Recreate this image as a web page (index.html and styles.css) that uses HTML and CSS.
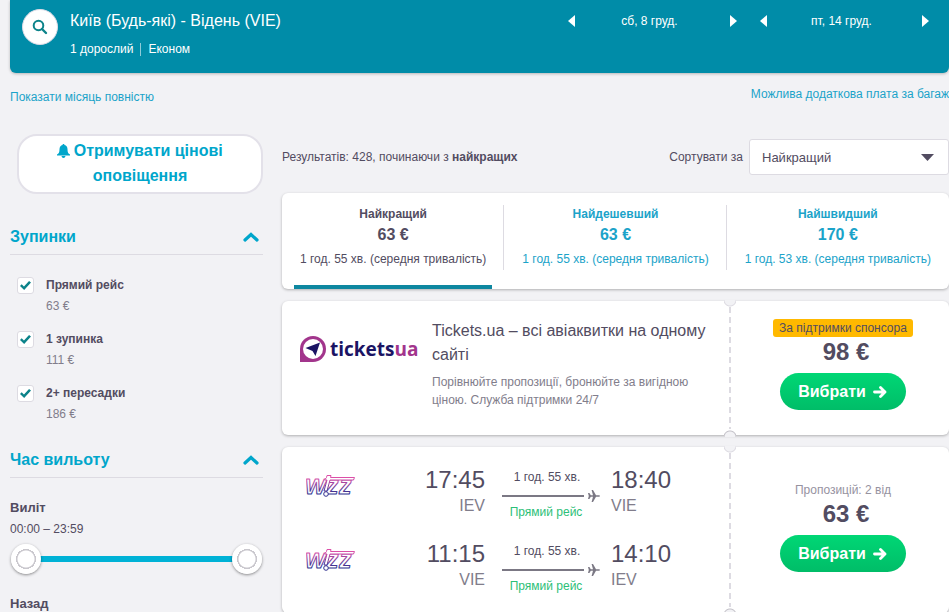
FILE: index.html
```html
<!DOCTYPE html>
<html lang="uk">
<head>
<meta charset="utf-8">
<meta name="viewport" content="width=device-width, initial-scale=1">
<title>Київ – Відень</title>
<link rel="stylesheet" href="styles.css">
</head>
<body>
<svg class="defs" aria-hidden="true">
  <defs>
    <linearGradient id="wizz-ink" gradientUnits="userSpaceOnUse" x1="0" y1="0" x2="0" y2="24">
      <stop offset="0.2" stop-color="#dc4fa8"/>
      <stop offset="0.85" stop-color="#30308f"/>
    </linearGradient>
    <symbol id="wizz" viewBox="0 0 50 24">
      <g fill="#fff" stroke="url(#wizz-ink)" stroke-width="1" stroke-linejoin="round">
        <text class="wizz-text" x="-1" y="21">W</text>
        <text class="wizz-text wizz-z" x="20" y="21">z</text>
        <text class="wizz-text wizz-z" x="33" y="21">z</text>
        <path d="M20.500 4.500l.5-2h4l-.5 2h24l-1 2.500H24l-3 11h-3l3-11h-2.500z"/>
        <circle cx="20" cy="21" r="2.300"/>
      </g>
    </symbol>
    <symbol id="plane" viewBox="0 0 12 12">
      <path fill="#7b7884" d="M0 3h1.400l1.400 2.200H5L3.600 0H5l3 5.200h3c1.300 0 1.300 1.600 0 1.600H8L5 12H3.600L5 6.800H2.800L1.400 9H0l.8-3z"/>
    </symbol>
    <symbol id="arrow" viewBox="0 0 14 12">
      <path d="M1.500 6h10.500M7.500 1.500L12 6l-4.500 4.500" fill="none" stroke="#fff" stroke-width="2.800" stroke-linecap="round" stroke-linejoin="round"/>
    </symbol>
    <symbol id="chevron" viewBox="0 0 16 10">
      <path d="M2 8l6-5.500L14 8" fill="none" stroke="#00a6cb" stroke-width="3.200" stroke-linecap="round"/>
    </symbol>
  </defs>
</svg>

<header class="search-bar">
  <button class="search-btn" type="button" aria-label="Пошук">
    <svg width="16" height="16" viewBox="0 0 16 16"><circle cx="6.500" cy="6.500" r="4.800" fill="none" stroke="#0c838a" stroke-width="2"/><path d="M10 10l4 4" stroke="#0c838a" stroke-width="2.400" stroke-linecap="round"/></svg>
  </button>
  <div class="trip">
    <h1>Київ (Будь-які) - Відень (VIE)</h1>
    <p><span>1 дорослий</span><span>Економ</span></p>
  </div>
  <div class="dates">
    <div class="date">
      <button class="prev" type="button" aria-label="Попередній день"></button>
      <span>сб, 8 груд.</span>
      <button class="next" type="button" aria-label="Наступний день"></button>
    </div>
    <div class="date">
      <button class="prev" type="button" aria-label="Попередній день"></button>
      <span>пт, 14 груд.</span>
      <button class="next" type="button" aria-label="Наступний день"></button>
    </div>
  </div>
</header>

<nav class="links">
  <a href="#month">Показати місяць повністю</a>
  <a href="#baggage" class="baggage">Можлива додаткова плата за багаж</a>
</nav>

<div class="layout">
  <aside class="filters">
    <button class="alert" type="button"><svg width="13" height="14" viewBox="0 0 13 14"><path fill="#00a6cb" d="M6.500 0c.7 0 1 .5 1 1.100 2 .5 3 2 3 4.100 0 3 .7 4.300 2.500 5.300v.9H0v-.9c1.800-1 2.500-2.300 2.500-5.300 0-2.100 1-3.600 3-4.100 0-.6.300-1.100 1-1.100zM4.500 12h4c-.2 1.300-1 2-2 2s-1.800-.7-2-2z"/></svg> Отримувати цінові оповіщення</button>

    <section>
      <h2><button type="button">Зупинки<svg width="16" height="10"><use href="#chevron"/></svg></button></h2>
      <ul class="stops">
        <li><input type="checkbox" id="s0" checked><label for="s0">Прямий рейс<small>63 €</small></label></li>
        <li><input type="checkbox" id="s1" checked><label for="s1">1 зупинка<small>111 €</small></label></li>
        <li><input type="checkbox" id="s2" checked><label for="s2">2+ пересадки<small>186 €</small></label></li>
      </ul>
    </section>

    <section>
      <h2><button type="button">Час вильоту<svg width="16" height="10"><use href="#chevron"/></svg></button></h2>
      <div class="times">
        <h3>Виліт</h3>
        <p>00:00 – 23:59</p>
        <div class="slider">
          <input type="range" min="0" max="1439" value="0" aria-label="Виліт від">
          <input type="range" min="0" max="1439" value="1439" aria-label="Виліт до">
        </div>
        <h3>Назад</h3>
      </div>
    </section>
  </aside>

  <main class="results">
    <div class="toolbar">
      <p>Результатів: 428, починаючи з <b>найкращих</b></p>
      <label for="sort">Сортувати за</label>
      <div class="select"><select id="sort"><option>Найкращий</option><option>Найдешевший</option><option>Найшвидший</option></select></div>
    </div>

    <div class="card tabs">
      <button class="tab active" type="button"><b>Найкращий</b><strong>63 €</strong><span>1 год. 55 хв. (середня тривалість)</span></button>
      <button class="tab" type="button"><b>Найдешевший</b><strong>63 €</strong><span>1 год. 55 хв. (середня тривалість)</span></button>
      <button class="tab" type="button"><b>Найшвидший</b><strong>170 €</strong><span>1 год. 53 хв. (середня тривалість)</span></button>
    </div>

    <article class="card ticket">
      <div class="sponsor">
        <svg class="tickets-logo" width="122" height="28" viewBox="0 0 122 28" role="img" aria-label="ticketsua">
          <path fill="#a2358c" d="M0 27V14A13 13 0 1 1 13 27z"/>
          <circle cx="13" cy="14" r="10" fill="#fff"/>
          <path fill="#1b1464" d="M5.500 13L20 7.500 15.500 21l-3-5z"/>
          <text class="tickets-text" x="30" y="21" fill="#1b1464">tickets<tspan fill="#a2358c">ua</tspan></text>
        </svg>
        <div>
          <h3>Tickets.ua – всі авіаквитки на одному сайті</h3>
          <p>Порівнюйте пропозиції, бронюйте за вигідною ціною. Служба підтримки 24/7</p>
        </div>
      </div>
      <div class="offer">
        <span class="badge">За підтримки спонсора</span>
        <strong>98 €</strong>
        <button class="select-btn" type="button">Вибрати<svg width="14" height="12"><use href="#arrow"/></svg></button>
      </div>
    </article>

    <article class="card ticket">
      <div class="legs">
        <div class="leg">
          <svg class="wizz" width="50" height="24" role="img" aria-label="Wizz"><use href="#wizz"/></svg>
          <div class="point from"><b>17:45</b><span>IEV</span></div>
          <div class="route"><span>1 год. 55 хв.</span><div class="line"><i></i><svg width="12" height="12"><use href="#plane"/></svg></div><em>Прямий рейс</em></div>
          <div class="point"><b>18:40</b><span>VIE</span></div>
        </div>
        <div class="leg">
          <svg class="wizz" width="50" height="24" role="img" aria-label="Wizz"><use href="#wizz"/></svg>
          <div class="point from"><b>11:15</b><span>VIE</span></div>
          <div class="route"><span>1 год. 55 хв.</span><div class="line"><i></i><svg width="12" height="12"><use href="#plane"/></svg></div><em>Прямий рейс</em></div>
          <div class="point"><b>14:10</b><span>IEV</span></div>
        </div>
      </div>
      <div class="offer">
        <span class="count">Пропозицій: 2 від</span>
        <strong>63 €</strong>
        <button class="select-btn" type="button">Вибрати<svg width="14" height="12"><use href="#arrow"/></svg></button>
      </div>
    </article>
  </main>
</div>
</body>
</html>
```
FILE: styles.css
```css
* { box-sizing: border-box; }

body {
  margin: 0;
  padding-left: 10px;
  background: #f2f2f5;
  color: #524c61;
  font: 12px/20px "Liberation Sans", Arial, sans-serif;
  overflow-x: hidden;
}

h1, h2, h3, p, ul { margin: 0; padding: 0; }
button { font: inherit; color: inherit; border: 0; padding: 0; background: none; cursor: pointer; }
a { color: #1ba3c9; text-decoration: none; }
.defs { position: absolute; width: 0; height: 0; }

/* Search summary */
.search-bar {
  display: flex;
  align-items: flex-start;
  gap: 12px;
  padding: 9px 20px 14px 12px;
  background: #008ca8;
  color: #fff;
  border-radius: 0 0 6px 6px;
  box-shadow: 0 1px 3px rgba(0, 0, 0, .25);
}
.search-btn {
  display: grid;
  place-items: center;
  width: 36px;
  height: 36px;
  border: 1px solid #dddbe6;
  border-radius: 50%;
  background: #fff;
}
.trip { flex: 1; }
.trip h1 { font-size: 16px; font-weight: 400; line-height: 24px; }
.trip p { display: flex; padding-top: 6px; }
.trip span + span { position: relative; margin-left: 7px; padding-left: 8px; }
.trip span + span::before {
  content: "";
  position: absolute;
  left: 0;
  top: 4px;
  height: 13px;
  border-left: 1px solid #8fcbd8;
}
.dates { display: flex; gap: 23px; padding-top: 2px; }
.date { display: flex; justify-content: space-between; align-items: center; width: 169px; }
.date span { padding-right: 6px; }
.prev, .next { width: 7px; height: 12px; background: #fff; }
.prev { clip-path: polygon(100% 0, 100% 100%, 0 50%); }
.next { clip-path: polygon(0 0, 100% 50%, 0 100%); }

.links { display: flex; justify-content: space-between; padding-top: 11px; }
.links a { padding-top: 3px; }
.links .baggage { padding-top: 0; }

.layout {
  display: grid;
  grid-template-columns: 253px 1fr;
  column-gap: 19px;
  padding-top: 27px;
}

/* Filters */
.alert {
  display: block;
  width: 246px;
  margin: 0 0 26px 7px;
  padding: 2px 36px 4px;
  border: 2px solid #e3e1e9;
  border-radius: 20px;
  background: #fff;
  color: #00a6cb;
  font-size: 16px;
  font-weight: 700;
  line-height: 25px;
}
.alert svg { vertical-align: -2px; margin-right: -1px; }
.filters h2 { border-bottom: 1px solid #dddbe2; font-size: 16px; line-height: 34px; }
.filters h2 button {
  display: flex;
  width: 100%;
  justify-content: space-between;
  align-items: center;
  padding-right: 4px;
  color: #00a6cb;
  font-weight: 700;
}
.stops { display: grid; gap: 12px; padding: 20px 0 18px 7px; list-style: none; }
.stops li { display: flex; gap: 12px; align-items: flex-start; }
.stops label { font-weight: 700; line-height: 21px; }
.stops small { display: block; color: #817d8b; font-size: 12px; font-weight: 400; }
.stops input {
  appearance: none;
  display: grid;
  place-items: center;
  width: 17px;
  height: 17px;
  margin: 2px 0 0;
  border: 1px solid #dddbe2;
  border-radius: 3px;
  background: #fff;
}
.stops input:checked::before {
  content: "";
  width: 11px;
  height: 9px;
  background: #0c838a;
  clip-path: polygon(0 55%, 15% 36%, 36% 60%, 82% 0, 100% 18%, 38% 100%);
}
.times { padding-top: 20px; }
.times h3 { font-size: 13px; line-height: 20px; }
.times p { line-height: 22px; }
.slider {
  display: grid;
  height: 38px;
  margin: 0 1px 16px;
  background: linear-gradient(#00b2d6, #00b2d6) center / 210px 6px no-repeat;
}
.slider input {
  grid-area: 1 / 1;
  appearance: none;
  width: 100%;
  margin: 0;
  background: none;
  pointer-events: none;
}
.slider input::-webkit-slider-thumb {
  appearance: none;
  width: 30px;
  height: 30px;
  border-radius: 50%;
  background: radial-gradient(circle, #fff 8px, #c9c7cd 9px, #c9c7cd 10px, #fff 10px);
  box-shadow: 0 1px 3px rgba(0, 0, 0, .45);
  pointer-events: auto;
}

/* Results */
.toolbar { display: flex; align-items: center; padding-top: 5px; margin-bottom: 18px; }
.toolbar p { flex: 1; }
.toolbar label { margin-right: 6px; }
.select { position: relative; width: 200px; }
.select::after {
  content: "";
  position: absolute;
  right: 15px;
  top: 15px;
  width: 13px;
  height: 7px;
  background: #524c61;
  clip-path: polygon(0 0, 100% 0, 50% 100%);
  pointer-events: none;
}
.select select {
  appearance: none;
  width: 100%;
  height: 36px;
  padding: 0 12px;
  border: 1px solid #dddbe2;
  border-radius: 3px;
  background: #fff;
  color: #524c61;
  font: 13px "Liberation Sans", Arial, sans-serif;
}
.card {
  margin-bottom: 12px;
  border-radius: 6px;
  background: #fff;
  box-shadow: 0 1px 3px rgba(0, 0, 0, .28);
}
.tabs { display: grid; grid-template-columns: repeat(3, 1fr); }
.tab {
  position: relative;
  display: flex;
  flex-direction: column;
  align-items: center;
  padding: 11px 0 20px;
  color: #1ba3c9;
}
.tab strong { font-size: 16px; line-height: 22px; }
.tab span { padding-top: 3px; white-space: nowrap; }
.tab.active { color: #524c61; }
.tab + .tab::before {
  content: "";
  position: absolute;
  left: -1px;
  top: 12px;
  height: 65px;
  border-left: 1px solid #dddbe2;
}
.tab.active::after {
  content: "";
  position: absolute;
  inset: auto 12px 0;
  height: 4px;
  background: #0e87a0;
}

.ticket { display: grid; grid-template-columns: 1fr 220px; }
.sponsor { display: flex; gap: 10px; padding: 18px 20px 26px 18px; }
.tickets-logo { flex: none; margin-top: 16px; width: 122px; overflow: visible; }
.tickets-text { font: 700 19px "Open Sans", sans-serif; }
.sponsor h3 { font-size: 16px; font-weight: 400; line-height: 24px; }
.sponsor p { padding-top: 6px; color: #817d8b; line-height: 18px; }

.offer {
  position: relative;
  display: flex;
  flex-direction: column;
  align-items: center;
  justify-content: center;
  padding: 0 0 7px 8px;
}
.offer::before {
  content: "";
  position: absolute;
  left: 0;
  top: 6px;
  bottom: 6px;
  width: 2px;
  background: repeating-linear-gradient(#dddbe2 0 6px, #fff 6px 10px);
}
.offer::after {
  content: "";
  position: absolute;
  left: -5px;
  top: -1px;
  bottom: -2px;
  width: 12px;
  background:
    radial-gradient(circle at 50% 0, #f2f2f5 5px, #dddbe2 6px, transparent 7px) top / 12px 8px no-repeat,
    radial-gradient(circle at 50% 100%, #f2f2f5 5px, #c4c2c9 6px, transparent 7px) bottom / 12px 8px no-repeat;
}
.badge, .count { line-height: 18px; }
.badge { padding: 0 6px; border-radius: 3px; background: #ffb900; }
.count { color: #96929f; }
.offer strong { padding: 1px 0 8px 6px; font-size: 24px; line-height: 27px; }
.select-btn {
  display: flex;
  align-items: center;
  gap: 7px;
  padding: 0 19px 0 18px;
  border-radius: 19px;
  background: linear-gradient(#00d775, #00bd68);
  color: #fff;
  font-size: 16px;
  font-weight: 700;
  line-height: 37px;
}

.legs { display: grid; gap: 20px; padding: 19px 0 19px 24px; }
.leg { display: grid; grid-template-columns: 50px 129px 100px 1fr; height: 54px; }
.wizz { margin-top: 7px; }
.wizz-text { font: italic 700 22px "Liberation Sans", Arial, sans-serif; }
.wizz-z { font-size: 25px; }
.point { display: flex; flex-direction: column; padding-left: 9px; }
.point b { font-size: 24px; font-weight: 400; line-height: 28px; }
.point span { color: #817d8b; font-size: 16px; line-height: 24px; }
.from { align-items: flex-end; padding: 0; }
.route { margin-left: 17px; margin-right: -17px; padding-top: 1px; text-align: center; }
.route > span { display: block; width: 90px; line-height: 20px; }
.route em { display: block; width: 88px; color: #2cc078; font-style: normal; line-height: 14px; }
.line { display: flex; align-items: center; gap: 4px; height: 18px; }
.line i { width: 82px; height: 2px; background: #7b7884; }
.leg .point:last-child { padding-left: 26px; }
```
